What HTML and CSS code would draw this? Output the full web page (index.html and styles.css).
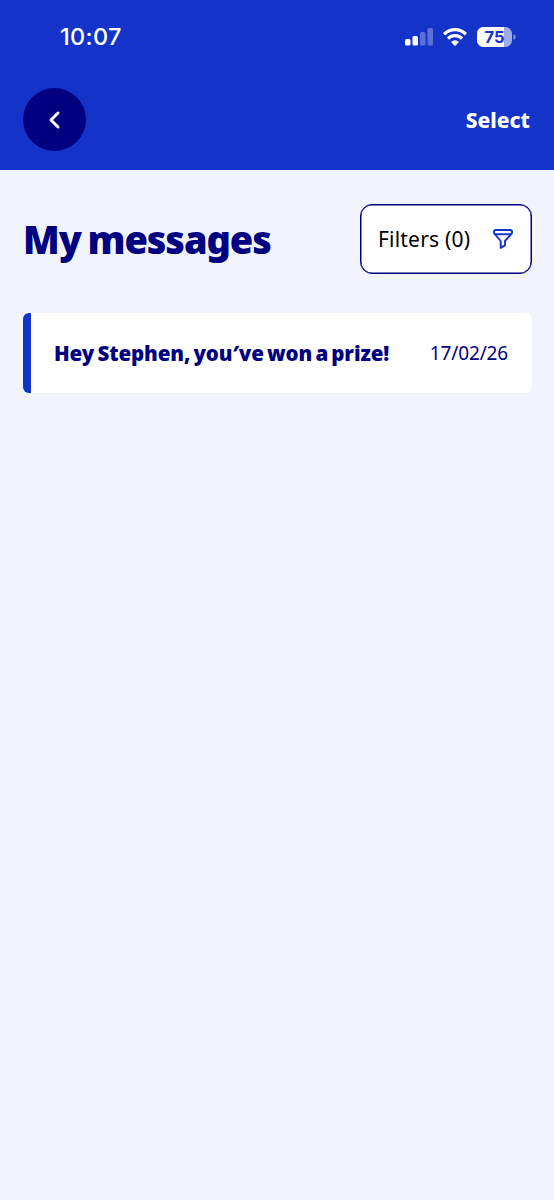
FILE: index.html
```
<!DOCTYPE html>
<html lang="en">
<head>
<meta charset="utf-8">
<title>My messages</title>
<link rel="stylesheet" href="styles.css">
</head>
<body>
<header class="header">
  <div class="status">
    <span class="time">10:07</span>
    <div class="status-icons">
      <svg class="signal" width="28" height="18" viewBox="0 0 28 18" fill="#fff">
        <rect x="0" y="11" width="5.5" height="6.5" rx="1.5"/>
        <rect x="7.5" y="8" width="5.5" height="9.5" rx="1.5"/>
        <g opacity=".3"><rect x="15" y="4" width="5.5" height="13.5" rx="1.5"/><rect x="22.5" y="0" width="5.5" height="17.5" rx="1.5"/></g>
      </svg>
      <svg class="wifi" width="24" height="18" viewBox="0 0 24 18">
        <g fill="none" stroke="#fff" stroke-width="3.300">
          <path d="M1.100 6.200Q6 1.700 12 1.700T22.900 6.200"/>
          <path d="M5 10.600Q8 7.700 12 7.700T19 10.600"/>
        </g>
        <path d="M8 14Q12 10.600 16 14L12.600 17.400Q12 18 11.400 17.400Z" fill="#fff"/>
      </svg>
      <svg class="battery" width="39" height="20" viewBox="0 0 39 20">
        <defs><clipPath id="shell"><rect width="35" height="20" rx="6.500"/></clipPath></defs>
        <g clip-path="url(#shell)"><rect width="35" height="20" fill="#a0aae8"/><rect width="27" height="20" fill="#fff"/></g>
        <path d="M36.500 7Q38.800 8 38.800 10T36.500 13Z" fill="#8894e0"/>
        <text class="charge" x="17.500" y="16.200" text-anchor="middle">75</text>
      </svg>
    </div>
  </div>
  <nav class="nav">
    <button class="back" aria-label="Back"><svg width="12" height="18" viewBox="0 0 12 18"><path d="M9 2L2 9L9 16" fill="none" stroke="#fff" stroke-width="2.900" stroke-linecap="round" stroke-linejoin="round"/></svg></button>
    <button class="select">Select</button>
  </nav>
</header>
<main class="content">
  <div class="heading">
    <h1 class="title">My messages</h1>
    <button class="filters"><span class="filters-label">Filters (0)</span>
      <svg width="20" height="20" viewBox="0 0 20 20" fill="none" stroke="#1433c8" stroke-width="1.900" stroke-linejoin="round"><rect x="1" y="1" width="18" height="4.200" rx="1.600"/><path d="M1.700 5L7.700 12V18.900L12 16.400V12L18.300 5"/></svg>
    </button>
  </div>
  <article class="message">
    <span class="subject">Hey Stephen, you′ve won a prize!</span>
    <time class="date">17/02/26</time>
  </article>
</main>
</body>
</html>
```
FILE: styles.css
```
* { box-sizing: border-box; }
body { margin: 0; min-height: 1200px; background: #f1f4fd; color: #000080; font-family: "Noto Sans", sans-serif; }
button { border: 0; padding: 0; background: none; font: inherit; white-space: nowrap; }
svg { display: block; flex: none; }
.header { height: 170px; background: #1433c8; color: #fff; }
.status { height: 74px; padding: 0 38px 0 60px; display: flex; align-items: center; justify-content: space-between; }
.time { font: 500 23.500px/30px Inter, sans-serif; letter-spacing: .3px; }
.status-icons { display: flex; align-items: center; gap: 10px; }
.charge { font: 700 16.500px Inter, sans-serif; fill: #1433c8; }
.nav { height: 91px; padding: 0 24px 0 23px; display: flex; align-items: center; justify-content: space-between; }
.back { width: 63px; height: 63px; border-radius: 50%; background: #000080; display: flex; align-items: center; justify-content: center; }
.select { color: #fff; font-size: 21px; font-weight: 800; }
.content { padding: 34px 22px 0 23px; }
.heading { height: 70px; display: flex; align-items: center; justify-content: space-between; }
.title { margin: 0; font-size: 38px; line-height: 50px; font-weight: 900; letter-spacing: -1.100px; word-spacing: -2px; white-space: nowrap; }
.filters { width: 172px; height: 70px; padding: 0 18px 0 17px; border: 2px solid #000080; border-radius: 12px; background: #fff; color: #000; display: flex; align-items: center; justify-content: space-between; }
.filters { border-width: 1px; box-shadow: inset 0 0 0 .5px #000080; }
.filters-label { font-size: 21px; letter-spacing: .2px; }
.message { height: 80px; margin-top: 38.500px; padding: 0 24px 0 31px; border-radius: 6px; background: linear-gradient(to right, #1433c8 8.500px, #fff 8.500px); display: flex; align-items: center; justify-content: space-between; white-space: nowrap; }
.subject { font-size: 20.500px; font-weight: 900; letter-spacing: -.1px; word-spacing: -2px; }
.date { font-size: 19px; letter-spacing: -.15px; }
```
